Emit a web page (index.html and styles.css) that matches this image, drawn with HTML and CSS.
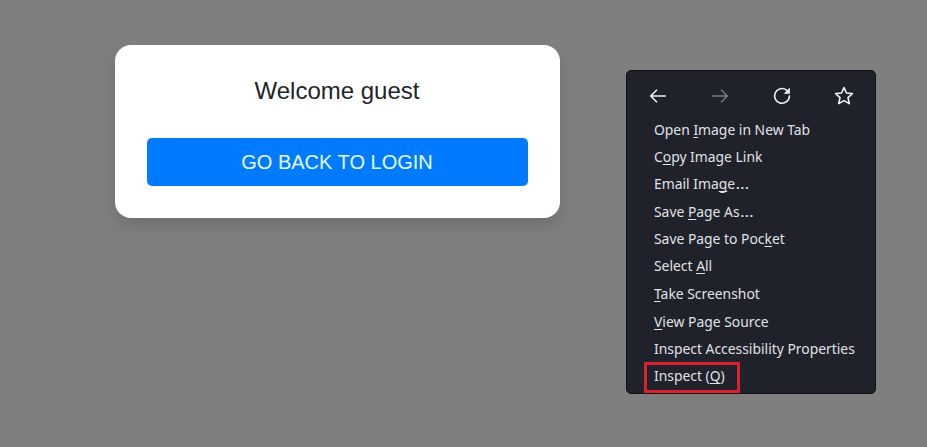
FILE: index.html
```html
<!DOCTYPE html>
<html lang="en">
<head>
<meta charset="utf-8">
<title>Welcome</title>
<link rel="stylesheet" href="styles.css">
</head>
<body>
<main class="card">
  <h1 class="card-title">Welcome guest</h1>
  <button class="btn" type="button">GO BACK TO LOGIN</button>
</main>
<nav class="menu">
  <div class="toolbar">
    <svg class="icon" viewBox="0 0 20 20"><path d="M17.3 10H3M8.5 4.2L2.7 10l5.8 5.8"/></svg>
    <svg class="icon disabled" viewBox="0 0 20 20"><path d="M2.7 10H17M11.5 4.2l5.8 5.8-5.8 5.8"/></svg>
    <svg class="icon" viewBox="0 0 20 20"><path d="M14.6 4.1A7.4 7.4 0 1 0 17.4 10"/><path class="solid" d="M17.9 1.6v6.2h-6.2z"/></svg>
    <svg class="icon" viewBox="0 0 20 20"><path d="M10 1.6l2.5 5.4 5.9.6-4.4 4 1.3 6-5.3-3-5.3 3 1.3-6-4.4-4 5.9-.6z"/></svg>
  </div>
  <ul class="items">
    <li><span class="label">Open <u>I</u>mage in New Tab</span></li>
    <li><span class="label">C<u>o</u>py Image Link</span></li>
    <li><span class="label">Email Ima<u>g</u>e<span class="dots">…</span></span></li>
    <li><span class="label">Save <u>P</u>age As<span class="dots">…</span></span></li>
    <li><span class="label">Save Page to Poc<u>k</u>et</span></li>
    <li><span class="label">Select <u>A</u>ll</span></li>
    <li><span class="label"><u>T</u>ake Screenshot</span></li>
    <li><span class="label"><u>V</u>iew Page Source</span></li>
    <li><span class="label">Inspect Accessibility Properties</span></li>
    <li class="marked"><span class="label">Inspect (<u>Q</u>)</span></li>
  </ul>
</nav>
</body>
</html>
```
FILE: styles.css
```css
* { box-sizing: border-box; }
body {
  margin: 0;
  height: 447px;
  overflow: hidden;
  display: flex;
  align-items: flex-start;
  gap: 66px;
  padding: 45px 0 0 115px;
  background: #7f7f7f;
}
.card {
  width: 445px;
  height: 173px;
  padding: 31px 32px 32px;
  border-radius: 16px;
  background: #fff;
  box-shadow: 0 8px 16px rgba(0, 0, 0, .13);
  font-family: "Liberation Sans", Arial, sans-serif;
}
.card-title {
  margin: 0 1px 33px 0;
  font-size: 24px;
  font-weight: 400;
  line-height: 29px;
  text-align: center;
  color: #212529;
}
.btn {
  display: block;
  width: 381px;
  height: 48px;
  padding: 0 1px 0 0;
  border: 0;
  border-radius: 5px;
  background: #007bff;
  color: #e6fbff;
  font: 20px/48px "Liberation Sans", Arial, sans-serif;
}
.menu {
  width: 250px;
  height: 324px;
  margin-top: 25px;
  border: 1px solid #101117;
  border-radius: 5px;
  background: #20222b;
  color: #e0e1e4;
  font: 15px/28px "Noto Sans", sans-serif;
}
.toolbar {
  display: grid;
  grid-template-columns: repeat(4, 62px);
  justify-items: center;
  align-items: center;
  height: 44px;
  padding-top: 5px;
}
.icon {
  width: 20px;
  height: 20px;
  fill: none;
  stroke: #f0f0f4;
  stroke-width: 1.6;
  stroke-linecap: round;
  stroke-linejoin: round;
}
.disabled { stroke: #7b7c83; }
.solid { fill: #f0f0f4; stroke: none; }
.items {
  display: grid;
  grid-template-rows: 27px 27px 28px 27px 27px 28px 28px 27px 27px 31px;
  margin: 0;
  padding: 0 0 0 27px;
  list-style: none;
}
.items li {
  display: flex;
  align-items: flex-start;
  white-space: nowrap;
}
.label {
  transform: scaleX(.925);
  transform-origin: left center;
}
.label u {
  text-underline-offset: 2px;
  text-decoration-thickness: 1px;
  text-decoration-skip-ink: none;
}
.dots {
  display: inline-block;
  transform: scaleX(1.25);
  transform-origin: left center;
}
.items .marked {
  width: 96px;
  height: 31px;
  margin: 1px 0 0 -10px;
  padding: 0 0 0 7px;
  border: 3px solid #d9222e;
  line-height: 20px;
}
```
